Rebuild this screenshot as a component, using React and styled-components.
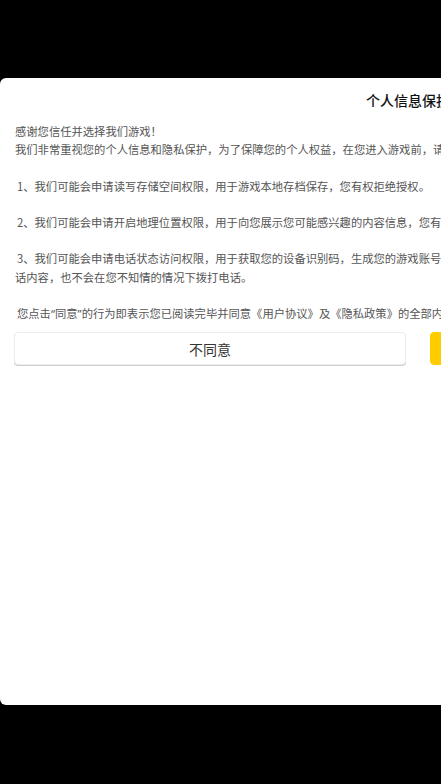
import React from "react";
import styled, { createGlobalStyle } from "styled-components";

const GlobalStyle = createGlobalStyle`
    html, body {
        margin: 0;
        padding: 0;
        background: #000;
    }
    body {
        font-family: "Noto Sans CJK SC", "Noto Sans", sans-serif;
    }
`;

const Screen = styled.div`
    width: 441px;
    height: 784px;
    overflow: hidden;
    background: #000;
    padding-top: 78px;
    box-sizing: border-box;
`;

const Card = styled.div`
    width: 844px;
    height: 627px;
    background: #fff;
    border-radius: 6px;
    box-sizing: border-box;
    padding: 12px 14px 0 14px;
`;

const Title = styled.div`
    text-align: center;
    font-size: 14px;
    line-height: 20px;
    font-weight: 500;
    color: #111;
    margin-bottom: 12px;
`;

const Body = styled.div`
    font-size: 11.3px;
    line-height: 18.2px;
    color: #555;
    margin-bottom: 9px;
`;

const Line = styled.div`
    white-space: nowrap;
    padding-left: ${({ $indent }) => ($indent ? "3px" : "1px")};
    min-height: 18.2px;
`;

const Quote = styled.span`
    font-family: "Noto Sans", sans-serif;
`;

const Buttons = styled.div`
    display: flex;
    gap: 24px;
`;

const Button = styled.div`
    width: 392px;
    height: 33px;
    box-sizing: border-box;
    border-radius: 4px;
    display: flex;
    align-items: center;
    justify-content: center;
    font-size: 14px;
    color: ${({ $primary }) => ($primary ? "#fff" : "#333")};
    background: ${({ $primary }) => ($primary ? "#ffcc00" : "#fff")};
    border: 1px solid ${({ $primary }) => ($primary ? "#ffcc00" : "#ececec")};
    box-shadow: ${({ $primary }) => ($primary ? "none" : "0 1px 0 #cfcfcf")};
`;

const lines = [
    { t: "感谢您信任并选择我们游戏！" },
    { t: "我们非常重视您的个人信息和隐私保护，为了保障您的个人权益，在您进入游戏前，请务必审慎阅读以下内容：" },
    { t: "" },
    { t: "1、我们可能会申请读写存储空间权限，用于游戏本地存档保存，您有权拒绝授权。", indent: true },
    { t: "" },
    { t: "2、我们可能会申请开启地理位置权限，用于向您展示您可能感兴趣的内容信息，您有权拒绝授权。", indent: true },
    { t: "" },
    { t: "3、我们可能会申请电话状态访问权限，用于获取您的设备识别码，生成您的游戏账号，我们不会获取您的通", indent: true },
    { t: "话内容，也不会在您不知情的情况下拨打电话。" },
    { t: "" },
    {
        t: (
            <>
                您点击<Quote>“</Quote>同意<Quote>”</Quote>的行为即表示您已阅读完毕并同意《用户协议》及《隐私政策》的全部内容。
            </>
        ),
        indent: true,
    },
];

export default function App() {
    return (
        <>
            <GlobalStyle />
            <Screen>
                <Card>
                    <Title>个人信息保护政策</Title>
                    <Body>
                        {lines.map((l, i) => (
                            <Line key={i} $indent={l.indent}>
                                {l.t}
                            </Line>
                        ))}
                    </Body>
                    <Buttons>
                        <Button>不同意</Button>
                        <Button $primary>同意</Button>
                    </Buttons>
                </Card>
            </Screen>
        </>
    );
}
